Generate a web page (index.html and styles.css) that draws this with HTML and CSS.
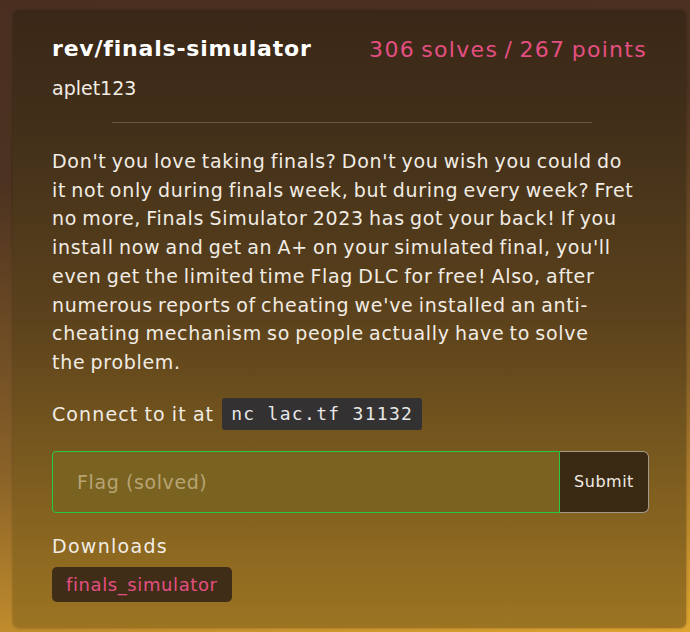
FILE: index.html
```html
<!DOCTYPE html>
<html>
<head>
<meta charset="utf-8">
<link rel="stylesheet" href="styles.css">
</head>
<body>
<div class="page">
  <div class="card">
    <div class="head">
      <div class="head-left">
        <div class="title">rev/finals-simulator</div>
        <div class="author">aplet123</div>
      </div>
      <div class="stats">306 solves / 267 points</div>
    </div>
    <hr class="divider">
    <p class="desc">Don't you love taking finals? Don't you wish you could do it not only during finals week, but during every week? Fret no more, Finals Simulator 2023 has got your back! If you install now and get an A+ on your simulated final, you'll even get the limited time Flag DLC for free! Also, after numerous reports of cheating we've installed an anti-cheating mechanism so people actually have to solve the&nbsp;problem.</p>
    <p class="connect">Connect to it at <code class="cmd">nc lac.tf 31132</code></p>
    <form class="flag-form">
      <input class="flag-input" type="text" placeholder="Flag (solved)">
      <button class="submit" type="button">Submit</button>
    </form>
    <div class="downloads-label">Downloads</div>
    <div class="downloads">
      <span class="chip">finals_simulator</span>
    </div>
  </div>
</div>
</body>
</html>
```
FILE: styles.css
```css
html, body {
  margin: 0;
  padding: 0;
  height: 100%;
}
body {
  background: linear-gradient(172deg, #4a2f20 0%, #4c3220 25%, #8a6228 65%, #e0a530 100%);
  font-family: "DejaVu Sans", "Noto Sans", sans-serif;
  color: #f1ece4;
}
.page {
  padding: 10px 4px 4px 13px;
  height: 100%;
  box-sizing: border-box;
}
.card {
  height: 618px;
  box-sizing: border-box;
  border-radius: 6px;
  background: linear-gradient(180deg, #3a2717 0%, #42301a 20%, #5c421c 50%, #7c5c1f 75%, #9c7422 100%);
  padding: 24px 39px 0 39px;
  box-shadow: 0 0 3px rgba(0,0,0,0.3);
}
.head {
  display: flex;
  justify-content: space-between;
  align-items: flex-start;
}
.title {
  font-weight: bold;
  font-size: 22px;
  line-height: 30px;
  color: #ffffff;
  letter-spacing: 0.8px;
}
.author {
  margin-top: 12px;
  font-size: 19px;
  line-height: 24px;
}
.stats {
  font-size: 22px;
  line-height: 32px;
  color: #e44f82;
  letter-spacing: 1.3px;
  word-spacing: -2px;
}
.divider {
  border: 0;
  height: 1px;
  background: #66584a;
  margin: 22px 55px 0 60px;
}
.desc {
  margin: 24px 0 0 0;
  font-size: 19px;
  line-height: 28.7px;
  letter-spacing: 0.7px;
  word-spacing: -1.5px;
  width: 584px;
}
.connect {
  margin: 21px 0 0 0;
  font-size: 19px;
  line-height: 32px;
  letter-spacing: 1.1px;
  word-spacing: -1px;
  display: flex;
  align-items: center;
  gap: 8px;
}
.cmd {
  font-family: "DejaVu Sans Mono", monospace;
  font-size: 18px;
  letter-spacing: 1.3px;
  word-spacing: 0;
  background: #333131;
  color: #e8e8e8;
  padding: 4px 9px;
  border-radius: 3px;
  line-height: 24px;
}
.flag-form {
  display: flex;
  margin: 21px 0 0 0;
  width: 597px;
  height: 62px;
}
.flag-input {
  flex: 1;
  box-sizing: border-box;
  height: 62px;
  border: 1px solid #27c93f;
  background: #7a6320;
  border-radius: 4px 0 0 4px;
  padding: 0 24px;
  font-family: inherit;
  font-size: 19px;
  letter-spacing: 0.6px;
  color: #fff;
  outline: none;
}
.flag-input::placeholder {
  color: #b7a374;
}
.submit {
  width: 89px;
  height: 62px;
  box-sizing: border-box;
  background: #3a2a14;
  border: 1px solid #a49a8c;
  border-left: 0;
  border-radius: 0 6px 6px 0;
  color: #f1ece4;
  font-family: inherit;
  font-size: 16px;
  letter-spacing: 0.5px;
  padding: 0;
}
.downloads-label {
  margin-top: 21px;
  font-size: 19px;
  letter-spacing: 1.3px;
  line-height: 24px;
}
.downloads {
  margin-top: 9px;
  display: flex;
}
.chip {
  background: #3f2d17;
  color: #e44f82;
  font-size: 18px;
  letter-spacing: 0.6px;
  line-height: 35px;
  padding: 0 14px;
  border-radius: 5px;
}
```
